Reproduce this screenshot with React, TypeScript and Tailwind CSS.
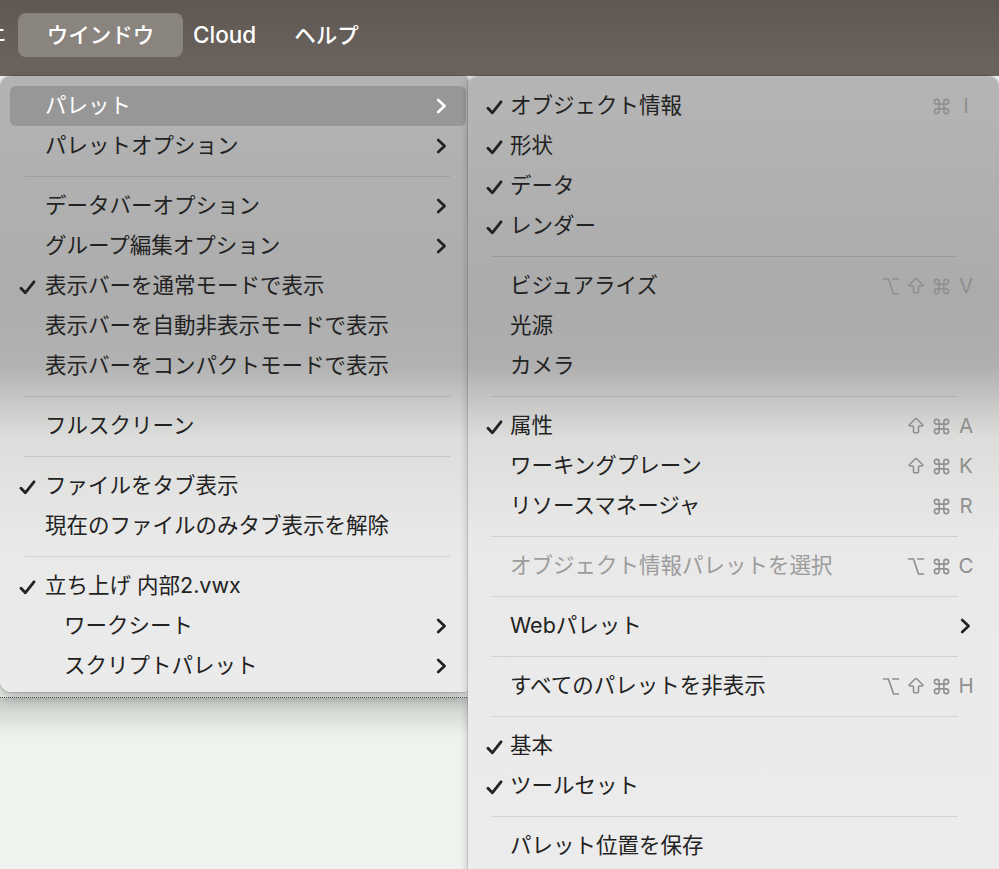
import React from "react";
import { Command, Option, ArrowBigUp } from "lucide-react";

const FONT = { fontFamily: '"Inter","Noto Sans CJK JP",sans-serif' };

function Check() {
  return (
    <svg width="17" height="15" viewBox="0 0 17 15" className="mt-[3px]">
      <path d="M2 8.2 L6.3 12.8 L15 1.8" stroke="currentColor" strokeWidth="2.8" fill="none" strokeLinecap="round" strokeLinejoin="round" />
    </svg>
  );
}

function Chevron() {
  return (
    <svg width="11" height="16" viewBox="0 0 11 16">
      <path d="M2.2 2 L8.6 8 L2.2 14" stroke="currentColor" strokeWidth="2.6" fill="none" strokeLinecap="round" strokeLinejoin="round" />
    </svg>
  );
}

function KeyGlyph({ k }: { k: string }) {
  if (k === "⌘") return <Command size={19} strokeWidth={2} />;
  if (k === "⌥") return <Option size={21} strokeWidth={2} />;
  if (k === "⇧") return <ArrowBigUp size={22} strokeWidth={1.9} />;
  return <span className="text-[20.5px] leading-none">{k}</span>;
}

function Keys({ keys }: { keys: string[] }) {
  return (
    <div className="flex items-center gap-[5px] text-[#8f8f8f]">
      {keys.map((k, i) => (
        <span key={i} className="w-[20px] h-[22px] flex items-center justify-center">
          <KeyGlyph k={k} />
        </span>
      ))}
    </div>
  );
}

type Item = {
  label?: string;
  sep?: boolean;
  check?: boolean;
  chev?: boolean;
  keys?: string[];
  indent?: boolean;
  hl?: boolean;
  dis?: boolean;
};

const leftItems: Item[] = [
  { label: "パレット", chev: true, hl: true },
  { label: "パレットオプション", chev: true },
  { sep: true },
  { label: "データバーオプション", chev: true },
  { label: "グループ編集オプション", chev: true },
  { label: "表示バーを通常モードで表示", check: true },
  { label: "表示バーを自動非表示モードで表示" },
  { label: "表示バーをコンパクトモードで表示" },
  { sep: true },
  { label: "フルスクリーン" },
  { sep: true },
  { label: "ファイルをタブ表示", check: true },
  { label: "現在のファイルのみタブ表示を解除" },
  { sep: true },
  { label: "立ち上げ 内部2.vwx", check: true },
  { label: "ワークシート", chev: true, indent: true },
  { label: "スクリプトパレット", chev: true, indent: true },
];

const rightItems: Item[] = [
  { label: "オブジェクト情報", check: true, keys: ["⌘", "I"] },
  { label: "形状", check: true },
  { label: "データ", check: true },
  { label: "レンダー", check: true },
  { sep: true },
  { label: "ビジュアライズ", keys: ["⌥", "⇧", "⌘", "V"] },
  { label: "光源" },
  { label: "カメラ" },
  { sep: true },
  { label: "属性", check: true, keys: ["⇧", "⌘", "A"] },
  { label: "ワーキングプレーン", keys: ["⇧", "⌘", "K"] },
  { label: "リソースマネージャ", keys: ["⌘", "R"] },
  { sep: true },
  { label: "オブジェクト情報パレットを選択", dis: true, keys: ["⌥", "⌘", "C"] },
  { sep: true },
  { label: "Webパレット", chev: true },
  { sep: true },
  { label: "すべてのパレットを非表示", keys: ["⌥", "⇧", "⌘", "H"] },
  { sep: true },
  { label: "基本", check: true },
  { label: "ツールセット", check: true },
  { sep: true },
  { label: "パレット位置を保存" },
];

function LeftMenu() {
  return (
    <div className="absolute left-0 top-[76px] w-[468px] h-[616px] rounded-l-[11px] rounded-r-[4px] pt-[10px] bg-[linear-gradient(180deg,#b3b3b3_0px,#adadad_230px,#b2b2b2_290px,#dcdddb_360px,#e9e9e9_470px,#ebebeb_616px)] shadow-[0_6px_14px_rgba(0,0,0,0.28),0_0_0_1px_rgba(0,0,0,0.12)]">
      {leftItems.map((it, i) =>
        it.sep ? (
          <div key={i} className="h-5 flex items-center pl-[25px] pr-[18px]">
            <div className="h-px w-full bg-black/[0.1]" />
          </div>
        ) : (
          <div
            key={i}
            className={`ml-[10px] mr-[2px] h-10 rounded-[6px] flex items-center pr-[19px] text-[21.5px] ${
              it.hl ? "bg-[#979797] text-white" : "text-[#222222]"
            }`}
          >
            <div className="w-[35px] pl-[9px] flex">{it.check ? <Check /> : null}</div>
            <span className={`flex-1 leading-none ${it.indent ? "pl-[19px]" : ""}`}>{it.label}</span>
            {it.chev ? <Chevron /> : null}
          </div>
        )
      )}
    </div>
  );
}

function RightMenu() {
  return (
    <div className="absolute left-[468px] top-[76px] w-[531px] h-[810px] rounded-[11px] pt-[10px] bg-[linear-gradient(180deg,#b5b5b5_0px,#ababab_230px,#afafaf_290px,#dcdddb_360px,#e9e9e9_470px,#ececec_810px)] shadow-[0_0_0_1px_rgba(0,0,0,0.1),-2px_0_6px_rgba(0,0,0,0.15)]">
      {rightItems.map((it, i) =>
        it.sep ? (
          <div key={i} className="h-5 flex items-center pl-[23px] pr-[41px]">
            <div className="h-px w-full bg-black/[0.1]" />
          </div>
        ) : (
          <div
            key={i}
            className={`h-10 flex items-center text-[21.5px] ${it.chev ? "pr-[28px]" : "pr-[23px]"} ${
              it.dis ? "text-[#9c9c9c]" : "text-[#222222]"
            }`}
          >
            <div className="w-[42px] pl-[18px] flex">{it.check ? <Check /> : null}</div>
            <span className="flex-1 leading-none">{it.label}</span>
            {it.keys ? <Keys keys={it.keys} /> : null}
            {it.chev ? <Chevron /> : null}
          </div>
        )
      )}
    </div>
  );
}

export default function App() {
  return (
    <div className="relative w-[999px] h-[869px] overflow-hidden bg-[#eef3ee]" style={FONT}>
      <div className="h-[76px] bg-[linear-gradient(180deg,#5f5752,#6c645f)] flex items-start text-white text-[21.5px] font-medium">
        <span className="mt-[22px] -ml-[14px] w-[22px] leading-none overflow-hidden">ェ</span>
        <div className="mt-[13px] ml-[10px] h-[44px] w-[165px] rounded-[8px] bg-[#8a847f] flex items-center justify-center">
          ウインドウ
        </div>
        <div className="mt-[13px] h-[44px] flex items-center pl-[10px] pr-[38px] text-[22.5px]">Cloud</div>
        <div className="mt-[13px] h-[44px] flex items-center">ヘルプ</div>
      </div>
      <div className="h-[622px] border-b border-dotted border-[#4a4a4a]" />
      <div className="h-[40px] bg-[linear-gradient(180deg,#c9ccc8,#eef3ee)]" />
      <LeftMenu />
      <RightMenu />
    </div>
  );
}
